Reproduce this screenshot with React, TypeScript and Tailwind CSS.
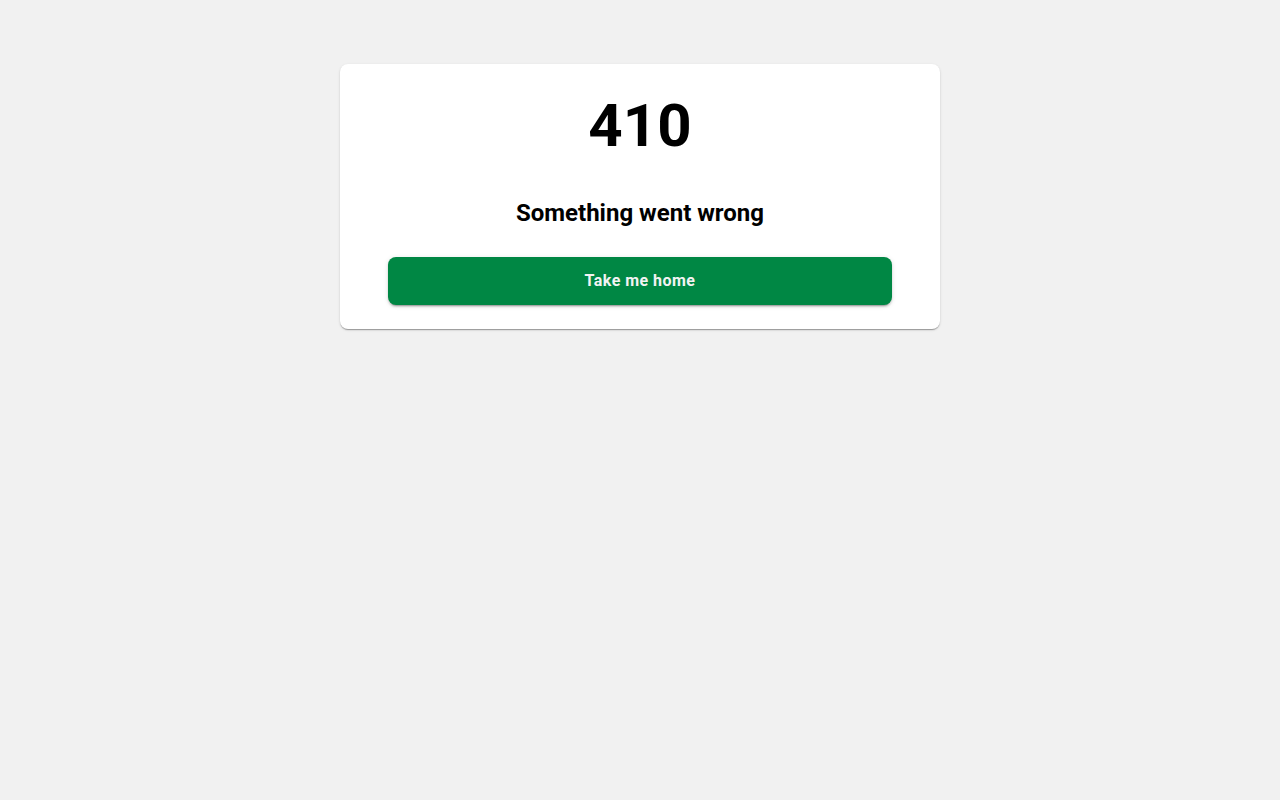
const App = () => {
    return (
        <div className="min-h-screen w-full bg-[#f1f1f1] pt-16 font-['Roboto',sans-serif]">
            <div className="mx-auto w-[600px] rounded-lg bg-white px-12 pt-8 pb-6 shadow-[0_2px_1px_-1px_rgba(0,0,0,0.2),0_1px_1px_0_rgba(0,0,0,0.14),0_1px_3px_0_rgba(0,0,0,0.12)]">
                <h1 className="text-center text-[60px] leading-[60px] font-bold text-black">
                    410
                </h1>
                <h2 className="mt-[41px] text-center text-2xl leading-8 font-bold text-black">
                    Something went wrong
                </h2>
                <button
                    type="button"
                    className="mt-7 flex h-12 w-full items-center justify-center rounded-lg bg-[#008744] text-base font-bold tracking-[0.02857em] text-[#f3f3f3] shadow-[0_3px_1px_-2px_rgba(0,0,0,0.2),0_2px_2px_0_rgba(0,0,0,0.14),0_1px_5px_0_rgba(0,0,0,0.12)]"
                >
                    Take me home
                </button>
            </div>
        </div>
    );
};

export default App;
